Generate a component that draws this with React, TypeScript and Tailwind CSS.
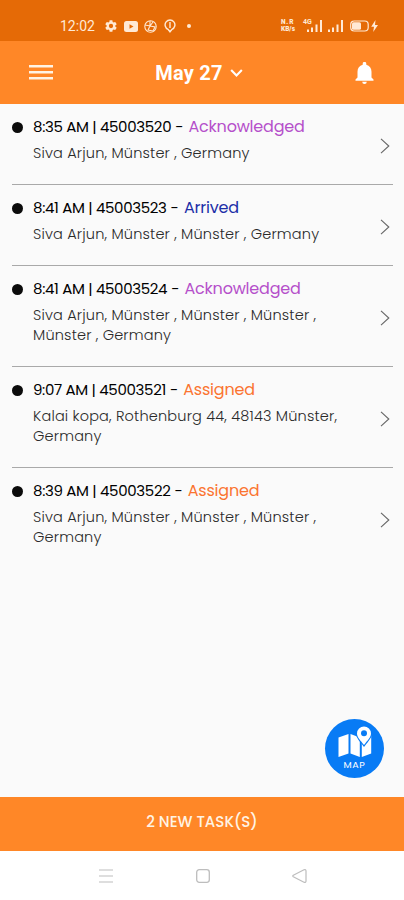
import { clsx } from 'clsx';

type Status = 'Acknowledged' | 'Arrived' | 'Assigned';

interface Task {
  time: string;
  id: string;
  status: Status;
  address: string[];
}

const tasks: Task[] = [
  {
    time: '8:35 AM',
    id: '45003520',
    status: 'Acknowledged',
    address: ['Siva Arjun, Münster , Germany'],
  },
  {
    time: '8:41 AM',
    id: '45003523',
    status: 'Arrived',
    address: ['Siva Arjun, Münster , Münster , Germany'],
  },
  {
    time: '8:41 AM',
    id: '45003524',
    status: 'Acknowledged',
    address: ['Siva Arjun, Münster , Münster , Münster ,', 'Münster , Germany'],
  },
  {
    time: '9:07 AM',
    id: '45003521',
    status: 'Assigned',
    address: ['Kalai kopa, Rothenburg 44, 48143 Münster,', 'Germany'],
  },
  {
    time: '8:39 AM',
    id: '45003522',
    status: 'Assigned',
    address: ['Siva Arjun, Münster , Münster , Münster ,', 'Germany'],
  },
];

const statusColors: Record<Status, string> = {
  Acknowledged: 'text-[#b54fca]',
  Arrived: 'text-[#1c2fa8]',
  Assigned: 'text-[#fb7430]',
};

function Signal({ className }: { className?: string }) {
  return (
    <svg width="15" height="12" viewBox="0 0 15 12" fill="currentColor" className={className}>
      <path d="M0 9.5h2V12H0zM4 7.500h2V12H4zM8.500 4.500h2V12h-2zM13 0h2v12h-2z" />
    </svg>
  );
}

function StatusBar() {
  return (
    <div className="flex h-[41px] items-start justify-between bg-[#e56a06] pl-[60px] pr-[25px] pt-4 text-[#ffe9d5]">
      <div className="flex h-5 items-center">
        <span className="w-[45px] font-[Roboto] text-[14px] leading-5">12:02</span>
        <svg width="12" height="12" viewBox="2 2 20 20" fill="currentColor">
          <path d="M19.140 12.940c.040-.300.060-.610.060-.940s-.020-.640-.070-.940l2.030-1.580a.490.490 0 0 0 .120-.610l-1.920-3.320a.490.490 0 0 0-.590-.220l-2.390.960c-.500-.380-1.030-.700-1.620-.940l-.360-2.540A.480.480 0 0 0 13.920 2.400h-3.840c-.240 0-.430.170-.470.410l-.360 2.540c-.590.240-1.130.570-1.620.940l-2.390-.960a.480.480 0 0 0-.590.220L2.740 8.870a.480.480 0 0 0 .120.610l2.030 1.580c-.050.300-.090.630-.090.940s.020.640.070.940l-2.030 1.580a.490.490 0 0 0-.120.610l1.920 3.320c.120.220.370.290.590.220l2.390-.960c.500.380 1.030.700 1.620.940l.360 2.540c.050.240.240.410.480.410h3.840c.240 0 .440-.170.470-.410l.360-2.540c.590-.240 1.130-.560 1.620-.940l2.390.960c.220.080.470 0 .590-.220l1.920-3.320a.480.480 0 0 0-.120-.610zM12 15.600a3.600 3.600 0 1 1 0-7.200 3.600 3.600 0 0 1 0 7.200z" />
        </svg>
        <svg width="14" height="11" viewBox="0 0 14 11" className="ml-[7px]">
          <rect width="14" height="11" rx="2.500" fill="currentColor" />
          <path d="M5.500 3.200v4.600l4-2.300z" fill="#e56a06" />
        </svg>
        <svg width="13" height="13" viewBox="0 0 13 13" className="ml-1.5" fill="none" stroke="currentColor" strokeWidth="1.100">
          <circle cx="6.500" cy="6.500" r="5.700" />
          <path d="M1 5l5 1 3-4M6 6l-2 4 5 1 2-4-5-1M6 1v5" />
        </svg>
        <svg width="12" height="14" viewBox="0 0 12 14" className="ml-[7px]" fill="none" stroke="currentColor" strokeWidth="1.400">
          <path d="M4 10.300a4.900 4.900 0 1 1 4 0l-2 2.500z" />
          <path d="M6 3v6" />
        </svg>
        <span className="ml-[11px] size-1 rounded-full bg-[#ffe9d5]" />
      </div>

      <div className="flex h-5 items-center">
        <div className="flex w-[14px] flex-col font-[Roboto] text-[6.500px] font-black leading-[7px]">
          <span className="tracking-[0.800px]">N.R</span>
          <span>KB/s</span>
        </div>
        <div className="relative ml-2">
          <Signal className="ml-1" />
          <span className="absolute -top-0.5 left-0 font-[Roboto] text-[7px] font-bold leading-[9px]">4G</span>
        </div>
        <Signal className="ml-1.5" />
        <svg width="29" height="12" viewBox="0 0 29 12" className="ml-[7px]">
          <rect x=".700" y="1" width="17.500" height="10" rx="3.500" fill="none" stroke="currentColor" strokeWidth="1.200" />
          <rect x="2" y="2.300" width="9" height="7.400" rx="1.500" fill="currentColor" />
          <path d="M25.500 0l-4.300 6.700h2.800L23.200 12l4.800-7h-3z" fill="currentColor" />
        </svg>
      </div>
    </div>
  );
}

function Header() {
  return (
    <header className="flex h-[63px] items-center justify-between bg-[#ff8727] pl-[29px] pr-[30px] text-white">
      <svg width="24" height="15" viewBox="0 0 24 15" fill="#fff3e4">
        <path d="M0 0h24v2.400H0zM0 6h24v2.400H0zM0 12h24v2.400H0z" />
      </svg>
      <div className="flex items-center gap-[7px] pr-2.5">
        <h1 className="font-[Roboto] text-[20px] font-bold leading-6 tracking-[0.200px]">May 27</h1>
        <svg width="13" height="8" viewBox="0 0 14 9" fill="none" stroke="currentColor" strokeWidth="2.400">
          <path d="M1 1.200l6 6 6-6" />
        </svg>
      </div>
      <svg width="19" height="22" viewBox="0 0 19 22" fill="currentColor">
        <path d="M9.500 22a2.300 2.300 0 0 0 2.300-2.200H7.200A2.300 2.300 0 0 0 9.500 22zM16.500 15.500V9.800c0-3.400-1.900-6.200-5.200-7V1.700a1.800 1.800 0 0 0-3.600 0v1.100c-3.300.8-5.200 3.600-5.200 7v5.700L.5 17.600v1.100h18v-1.100z" />
      </svg>
    </header>
  );
}

function TaskRow({ task, last }: { task: Task; last: boolean }) {
  return (
    <li
      className={clsx(
        'ml-3 mr-[11px] flex items-start border-b pb-[21px] pt-[11px]',
        last ? 'border-transparent' : 'border-[#a9a9a9]',
      )}
    >
      <span className="mt-[7px] size-[11px] shrink-0 rounded-full bg-[#0b0b0b]" />
      <div className="ml-2.5 flex-1 whitespace-nowrap">
        <p className="flex h-6 items-center text-[15px] text-black">
          <span className="tracking-[-0.340px]">
            {task.time} | {task.id}
          </span>
          <span className="ml-1 mr-[5px]">-</span>
          <span className={clsx('text-[16px] tracking-[-0.200px]', statusColors[task.status])}>{task.status}</span>
        </p>
        <div className="mt-1 text-[14.500px] font-light leading-5 tracking-[0.180px] text-[#2a2a2a]">
          {task.address.map((line) => (
            <p key={line}>{line}</p>
          ))}
        </div>
      </div>
      <svg
        width="10"
        height="16"
        viewBox="0 0 10 16"
        fill="none"
        stroke="#666"
        strokeWidth="1.100"
        className="mr-[3px] mt-3.5 shrink-0 self-center"
      >
        <path d="M1 .8L8.800 8 1 15.200" />
      </svg>
    </li>
  );
}

function MapButton() {
  return (
    <button className="absolute bottom-[19px] right-5 flex size-[59px] flex-col items-center rounded-full bg-[#087bf5] pt-[7px] text-white">
      <svg width="34" height="32" viewBox="0 0 34 32" fill="currentColor">
        <path d="M.5 11.500l10-3.500v19.500L.5 31zM12.500 8l9.300 3.500V31l-9.300-3.500zM23.800 11.500L33.200 8v19.500L23.800 31z" />
        <path
          d="M26 .5a7 7 0 0 1 7 7c0 4-3.700 7-7 11.500-3.300-4.500-7-7.500-7-11.500a7 7 0 0 1 7-7z"
          stroke="#087bf5"
          strokeWidth="2.400"
          paintOrder="stroke"
        />
        <circle cx="26" cy="7.300" r="3" fill="#087bf5" />
      </svg>
      <span className="mt-0.5 text-[9.500px] leading-[10px] tracking-[0.600px]">MAP</span>
    </button>
  );
}

function NavigationBar() {
  return (
    <nav className="flex h-[49px] items-center justify-between bg-white pl-[99px] pr-[97px] text-[#bdbdbd]">
      <svg width="14" height="14" viewBox="0 0 14 14" stroke="currentColor" strokeWidth="1.200">
        <path d="M0 1h14M0 7h14M0 13h14" />
      </svg>
      <svg width="14" height="14" viewBox="0 0 14 14" fill="none" stroke="currentColor" strokeWidth="1.300">
        <rect x=".7" y=".7" width="12.600" height="12.600" rx="2.500" />
      </svg>
      <svg width="15" height="14" viewBox="0 0 15 14" fill="none" stroke="currentColor" strokeWidth="1.200" strokeLinejoin="round">
        <path d="M1.300 6.200L12 .8q2-.6 2 1.200v10q0 1.800-2 1.200L1.300 7.800q-1-.8 0-1.600z" />
      </svg>
    </nav>
  );
}

export default function App() {
  return (
    <div className="flex h-[900px] w-[404px] flex-col overflow-hidden bg-[#fafafa] font-[Poppins,Inter,sans-serif]">
      <StatusBar />
      <Header />
      <main className="relative flex-1">
        <ul>
          {tasks.map((task, i) => (
            <TaskRow key={task.id} task={task} last={i === tasks.length - 1} />
          ))}
        </ul>
        <MapButton />
      </main>
      <button className="flex h-[54px] items-center justify-center bg-[#ff8727] pb-1 text-[15px] font-medium text-[#fff3e4]">
        2 NEW TASK(S)
      </button>
      <NavigationBar />
    </div>
  );
}
